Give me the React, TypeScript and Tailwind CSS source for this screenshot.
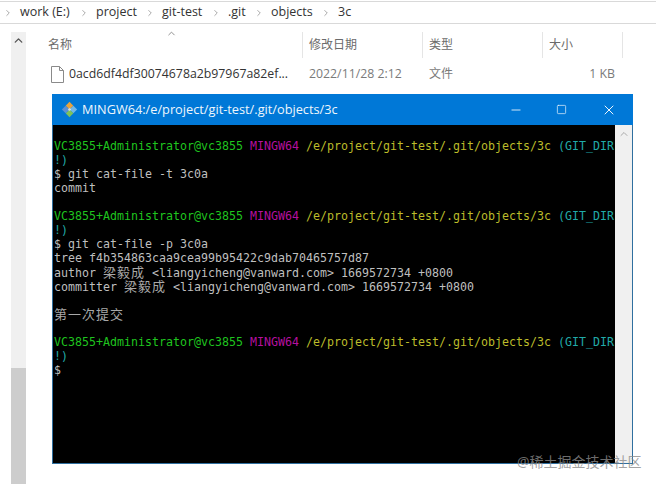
import { Minus, Square, X, ChevronRight, ChevronUp } from "lucide-react";

const crumbs = [
  { label: "work (E:)", w: "w-[59px]" },
  { label: "project", w: "w-[49px]" },
  { label: "git-test", w: "w-[49px]" },
  { label: ".git", w: "w-[26px]" },
  { label: "objects", w: "w-[50px]" },
  { label: "3c", w: "w-[20px]" },
];

function GitIcon() {
  return (
    <svg width="17" height="17" viewBox="0 0 20 20">
      <path d="M10 1 L14.5 5.5 L10 10 L5.5 5.5 Z" fill="#e8a33d" />
      <path d="M14.5 5.5 L19 10 L14.5 14.5 L10 10 Z" fill="#6fb7e8" />
      <path d="M10 10 L14.5 14.5 L10 19 L5.5 14.5 Z" fill="#7ec25a" />
      <path d="M5.5 5.5 L10 10 L5.5 14.5 L1 10 Z" fill="#5a8fd6" />
      <circle cx="10" cy="10" r="1.6" fill="#ffffff" opacity="0.7" />
    </svg>
  );
}

function Prompt() {
  return (
    <>
      <div className="h-[14px]">
        <span className="text-[#1fc41f]">VC3855+Administrator@vc3855</span>{" "}
        <span className="text-[#b5109f]">MINGW64</span>{" "}
        <span className="text-[#bcbc2a]">/e/project/git-test/.git/objects/3c</span>{" "}
        <span className="text-[#20aaa8]">(GIT_DIR</span>
      </div>
      <div className="h-[14px] text-[#20aaa8]">!)</div>
    </>
  );
}

function Cjk({ children }: { children: string }) {
  return (
    <span className="inline-block h-[14px] font-['Noto_Sans_CJK_SC',sans-serif] text-[13px] leading-[14px] tracking-[1px] text-[#a8a8a8]">
      {children}
    </span>
  );
}

export default function App() {
  return (
    <div className="relative h-[484px] w-[656px] overflow-hidden bg-white font-['Open_Sans','Noto_Sans_CJK_SC',sans-serif]">
      {/* breadcrumb */}
      <div className="mt-px flex h-[23px] items-center border-y border-[#d9d9d9] pl-[3px] text-[12.5px] text-[#333]">
        {crumbs.map((c) => (
          <div key={c.label} className="flex items-center">
            <ChevronRight size={10} strokeWidth={2} className="mr-[7px] text-[#999]" />
            <span className={`${c.w} whitespace-nowrap`}>{c.label}</span>
          </div>
        ))}
      </div>

      <div className="flex h-[460px]">
        {/* left scrollbar */}
        <div className="ml-[11px] mt-2 flex h-[452px] w-[15px] flex-col bg-[#f0f0f0]">
          <ChevronUp size={13} strokeWidth={2.5} className="mx-auto mt-[2px] text-[#555]" />
          <div className="mt-auto h-[116px] bg-[#cdcdcd]" />
        </div>

        {/* file list */}
        <div className="ml-[22px] flex-1">
          <div className="relative mt-2 flex h-[26px] items-center text-[12px] text-[#6b6b6b]">
            <ChevronUp size={11} className="absolute left-[118px] top-[-4px] text-[#888]" />
            <span className="w-[254px]">名称</span>
            <span className="h-[26px] w-[7px] border-l border-[#e5e5e5]" />
            <span className="w-[113px]">修改日期</span>
            <span className="h-[26px] w-[7px] border-l border-[#e5e5e5]" />
            <span className="w-[113px]">类型</span>
            <span className="h-[26px] w-[7px] border-l border-[#e5e5e5]" />
            <span className="w-[73px]">大小</span>
            <span className="h-[26px] border-l border-[#e5e5e5]" />
          </div>
          <div className="mt-[4px] flex h-[24px] items-center text-[12.3px] text-[#7a7a7a]">
            <svg width="13" height="17" viewBox="0 0 13 17" className="ml-[3px] shrink-0">
              <path d="M0.5 0.5 H8.5 L12.5 4.5 V16.5 H0.5 Z M8.5 0.5 V4.5 H12.5" fill="#fff" stroke="#8a8a8a" />
            </svg>
            <span className="ml-[5px] w-[240px] whitespace-nowrap text-[#333]">0acd6df4df30074678a2b97967a82ef...</span>
            <span className="w-[120px]">2022/11/28 2:12</span>
            <span className="w-[120px] text-[12px]">文件</span>
            <span className="w-[66px] text-right">1 KB</span>
          </div>
        </div>
      </div>

      {/* terminal window on top of the explorer */}
      <div className="absolute left-[52px] top-[94px] flex h-[370px] w-[581px] flex-col border border-t-0 border-[#2f6f9f] bg-[#f0f0f0]">
        <div className="-mx-px flex h-[31px] shrink-0 items-center bg-[#0078d7] text-[#eef6fc]">
          <div className="ml-[9px]">
            <GitIcon />
          </div>
          <span className="ml-[4px] whitespace-nowrap text-[12.75px]">MINGW64:/e/project/git-test/.git/objects/3c</span>
          <Minus size={14} strokeWidth={1.5} className="ml-auto" />
          <Square size={11} strokeWidth={1.5} className="ml-[33px]" />
          <X size={16} strokeWidth={1.5} className="ml-[34px] mr-[16px]" />
        </div>
        <div className="flex min-h-0 flex-1">
          <div className="w-[562px] overflow-hidden bg-black pl-px pt-[14px] font-['DejaVu_Sans_Mono','Noto_Sans_CJK_SC',monospace] text-[11.63px] leading-[14px] whitespace-pre text-[#bfbfbf]">
            <Prompt />
            <div className="h-[14px]">$ git cat-file -t 3c0a</div>
            <div className="h-[14px]">commit</div>
            <div className="h-[14px]" />
            <Prompt />
            <div className="h-[14px]">$ git cat-file -p 3c0a</div>
            <div className="h-[14px]">tree f4b354863caa9cea99b95422c9dab70465757d87</div>
            <div className="h-[14px]">
              author <Cjk>梁毅成</Cjk> {"<liangyicheng@vanward.com> 1669572734 +0800"}
            </div>
            <div className="h-[14px]">
              committer <Cjk>梁毅成</Cjk> {"<liangyicheng@vanward.com> 1669572734 +0800"}
            </div>
            <div className="h-[14px]" />
            <div className="h-[14px]">
              <Cjk>第一次提交</Cjk>
            </div>
            <div className="h-[14px]" />
            <Prompt />
            <div className="h-[14px]">$</div>
          </div>
          <div className="flex flex-1 justify-center pt-[3px]">
            <ChevronUp size={12} strokeWidth={2} className="text-[#aaa]" />
          </div>
        </div>
      </div>

      {/* watermark */}
      <div className="absolute left-[517px] top-[451px] whitespace-nowrap text-[14px] text-[#8a8a8a]/80">@稀土掘金技术社区</div>
    </div>
  );
}
